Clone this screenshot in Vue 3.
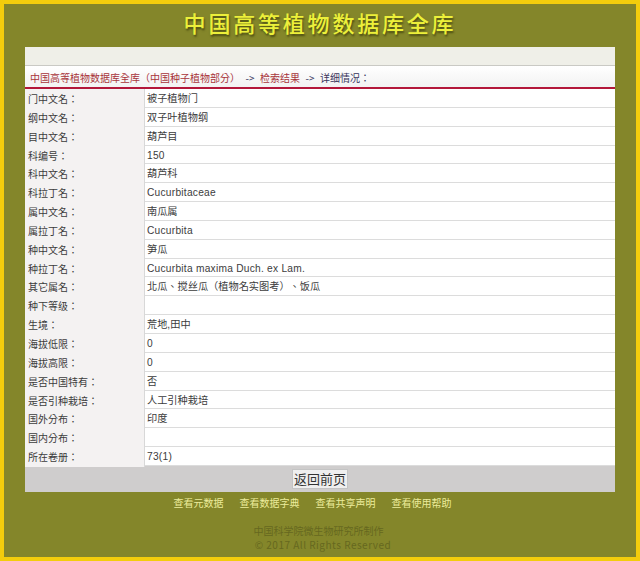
<script setup>
const rows = [
  ['门中文名：', '被子植物门'],
  ['纲中文名：', '双子叶植物纲'],
  ['目中文名：', '葫芦目'],
  ['科编号：', '150'],
  ['科中文名：', '葫芦科'],
  ['科拉丁名：', 'Cucurbitaceae'],
  ['属中文名：', '南瓜属'],
  ['属拉丁名：', 'Cucurbita'],
  ['种中文名：', '笋瓜'],
  ['种拉丁名：', 'Cucurbita maxima Duch. ex Lam.'],
  ['其它属名：', '北瓜、搅丝瓜（植物名实图考）、饭瓜'],
  ['种下等级：', ''],
  ['生境：', '荒地,田中'],
  ['海拔低限：', '0'],
  ['海拔高限：', '0'],
  ['是否中国特有：', '否'],
  ['是否引种栽培：', '人工引种栽培'],
  ['国外分布：', '印度'],
  ['国内分布：', ''],
  ['所在卷册：', '73(1)'],
]
const links = ['查看元数据', '查看数据字典', '查看共享声明', '查看使用帮助']
const isLatin = (text) => /^[\x00-\x7f]+$/.test(text)
</script>

<template>
  <div class="page">
    <h1 class="title">中国高等植物数据库全库</h1>
    <main class="panel">
      <div class="topbar"></div>
      <div class="crumbs">
        <span class="red">中国高等植物数据库全库（中国种子植物部分）</span>
        <span class="dark arrow">-&gt;</span>
        <span class="red">检索结果</span>
        <span class="dark arrow">-&gt;</span>
        <span class="dark">详细情况：</span>
      </div>
      <div class="table">
        <div v-for="row in rows" :key="row[0]" class="row">
          <div class="label">{{ row[0] }}</div>
          <div class="value" :class="{ latin: isLatin(row[1]) }">{{ row[1] }}</div>
        </div>
      </div>
      <div class="actions">
        <button class="back" type="button">返回前页</button>
      </div>
    </main>
    <nav class="links">
      <a v-for="link in links" :key="link">{{ link }}</a>
    </nav>
    <footer class="credit">
      <div>中国科学院微生物研究所制作</div>
      <div class="rights">© 2017 All Rights Reserved</div>
    </footer>
  </div>
</template>

<style>
html, body { margin: 0; background: #f5cf0a; }
</style>

<style scoped>
.page {
  box-sizing: border-box;
  width: 640px;
  height: 561px;
  overflow: hidden;
  background: #84862a;
  border: 4px solid #f3cd0c;
  font-family: "Noto Sans CJK SC", "Liberation Sans", sans-serif;
  font-size: 10px;
  color: #3c3c3c;
  text-spacing-trim: space-all;
}
.title {
  margin: 0;
  height: 43px;
  box-sizing: border-box;
  padding-top: 2px;
  text-align: center;
  font-size: 22px;
  line-height: 32px;
  font-weight: 500;
  letter-spacing: 2.8px;
  color: #ecf03a;
  text-shadow: 1px 2px 2px #4d4e12;
}
.panel {
  margin: 0 21px;
  width: 590px;
  background: #fff;
}
.topbar {
  height: 18px;
  background: #efefe8;
  border-bottom: 1px solid #c9c9c4;
}
.crumbs {
  box-sizing: border-box;
  height: 23px;
  padding: 4px 5px 0;
  line-height: 16px;
  font-family: "Noto Sans CJK TC", "Liberation Sans", sans-serif;
  background: linear-gradient(#fff, #f2f2f2);
  border-bottom: 2px solid #b3173a;
}
.red { color: #a8343a; }
.dark { color: #38345c; }
.arrow { margin: 0 5.5px; }
.table {
  display: grid;
  grid-auto-rows: 18.85px;
}
.row {
  display: grid;
  grid-template-columns: 120px 1fr;
  border-bottom: 1px solid #dcdcdc;
  line-height: 20px;
}
.label {
  padding-left: 3px;
  font-family: "Noto Sans CJK TC", "Liberation Sans", sans-serif;
  background: #f4f2f2;
  border-right: 1px solid #d8d8d8;
}
.value {
  padding-left: 2px;
  font-family: "Liberation Sans", "Noto Sans CJK TC", sans-serif;
  font-size: 10.2px;
}
.latin {
  letter-spacing: 0.25px;
}
.actions {
  height: 26px;
  display: flex;
  align-items: center;
  justify-content: center;
  background: #cfcdcd;
}
.back {
  height: 20px;
  width: 56px;
  padding: 0;
  border: 1px solid #c4c4c4;
  background: #efefef;
  font: 13px/18px "Noto Sans CJK SC", sans-serif;
  color: #333;
}
.links {
  display: flex;
  justify-content: center;
  gap: 16px;
  margin-top: 2px;
  padding-right: 15px;
  height: 22px;
  line-height: 18px;
  color: #ecec9c;
}
.credit {
  margin-top: 8px;
  padding-right: 3px;
  text-align: center;
  line-height: 14px;
  color: #66681f;
}
.rights {
  padding-left: 9px;
  letter-spacing: 0.5px;
}
</style>
